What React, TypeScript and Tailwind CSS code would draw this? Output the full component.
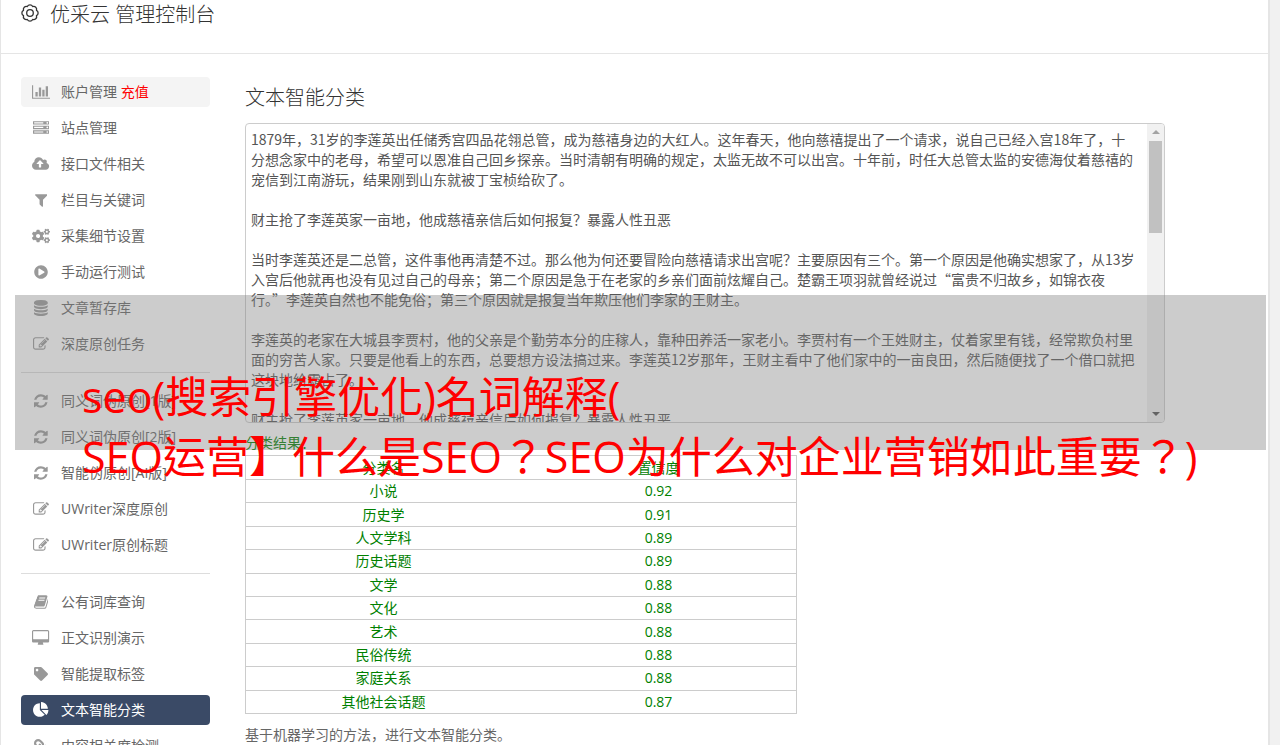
import type { ReactNode } from "react";
import clsx from "clsx";
import { FaCogs, FaLink, FaPlayCircle, FaTag } from "react-icons/fa";

type GlyphProps = {
  width: number;
  d: string;
};

const Glyph: React.FC<GlyphProps> = ({ width, d }) => (
  <svg viewBox={`0 0 ${width} 1792`} className="h-4 w-auto" fill="currentColor">
    <path d={d} />
  </svg>
);

const Gear = () => (
  <svg viewBox="0 0 18 18" className="mt-1 size-[18px]" fill="none" stroke="currentColor" strokeWidth="1.3" strokeLinejoin="round">
    <path d="M15.470 6.320A3 3 0 0 1 15.470 11.680A3 3 0 0 1 11.680 15.470A3 3 0 0 1 6.320 15.470A3 3 0 0 1 2.530 11.680A3 3 0 0 1 2.530 6.320A3 3 0 0 1 6.320 2.530A3 3 0 0 1 11.680 2.530A3 3 0 0 1 15.470 6.320Z" />
    <circle cx="9" cy="9" r="3.300" />
  </svg>
);

const BarChart = () => <Glyph width={2048} d="M640 896v512H384V896h256zm384-512v1024H768V384h256zm1024 1152v128H0V128h128v1408h1920zm-640-896v768h-256V640h256zm384-384v1152h-256V256h256z" />;
const Server = () => <Glyph width={1792} d="M128 1408h1024v-128h-1024v128zm0-512h1024v-128h-1024v128zm1568 448q0-40-28-68t-68-28-68 28-28 68 28 68 68 28 68-28 28-68zm-1568-960h1024v-128h-1024v128zm1568 448q0-40-28-68t-68-28-68 28-28 68 28 68 68 28 68-28 28-68zm0-512q0-40-28-68t-68-28-68 28-28 68 28 68 68 28 68-28 28-68zm96 832v384h-1792v-384h1792zm0-512v384h-1792v-384h1792zm0-512v384h-1792v-384h1792z" />;
const CloudUpload = () => <Glyph width={1920} d="M1280 864q0-14-9-23l-352-352q-9-9-23-9t-23 9l-351 351q-10 12-10 24 0 14 9 23t23 9h224v352q0 13 9.500 22.500t22.500 9.500h192q13 0 22.500-9.500t9.500-22.500v-352h224q13 0 22.500-9.500t9.500-22.500zm640 288q0 159-112.500 271.500t-271.500 112.500h-1088q-185 0-316.500-131.500t-131.500-316.500q0-130 70-240t188-165q-2-30-2-43 0-212 150-362t362-150q156 0 285.500 87t188.500 231q71-62 166-62 106 0 181 75t75 181q0 76-41 138 130 31 213.500 135.500t83.500 238.500z" />;
const Filter = () => <Glyph width={1408} d="M1403 295q17 41-14 70l-493 493v742q0 42-39 59-13 5-25 5-27 0-45-19l-256-256q-19-19-19-45v-486l-493-493q-31-29-14-70 17-39 59-39h1280q42 0 59 39z" />;
const Database = () => <Glyph width={1536} d="M768 768q237 0 443-43t325-127v170q0 69-103 128t-280 93.5-385 34.500-385-34.500-280-93.500-103-128v-170q119 84 325 127t443 43zm0 768q237 0 443-43t325-127v170q0 69-103 128t-280 93.500-385 34.500-385-34.500-280-93.500-103-128v-170q119 84 325 127t443 43zm0-384q237 0 443-43t325-127v170q0 69-103 128t-280 93.500-385 34.500-385-34.500-280-93.500-103-128v-170q119 84 325 127t443 43zm0-1152q208 0 385 34.500t280 93.500 103 128v128q0 69-103 128t-280 93.500-385 34.500-385-34.500-280-93.500-103-128v-128q0-69 103-128t280-93.500 385-34.500z" />;
const Edit = () => <Glyph width={1792} d="M888 1184l116-116-152-152-116 116v56h96v96h56zm440-720q-16-16-33 1l-350 350q-17 17-1 33t33-1l350-350q17-17 1-33zm80 594v190q0 119-84.500 203.500t-203.500 84.500h-832q-119 0-203.500-84.500t-84.500-203.500v-832q0-119 84.500-203.500t203.500-84.500h832q63 0 117 25 15 7 18 23 3 17-9 29l-49 49q-14 14-32 8-23-6-45-6h-832q-66 0-113 47t-47 113v832q0 66 47 113t113 47h832q66 0 113-47t47-113v-126q0-13 9-22l64-64q15-15 35-7t20 29zm-96-738l288 288-672 672h-288v-288zm444 132l-92 92-288-288 92-92q28-28 68-28t68 28l152 152q28 28 28 68t-28 68z" />;
const Refresh = () => <Glyph width={1536} d="M1511 1056q0 5-1 7-64 268-268 434.500t-478 166.500q-146 0-282.500-55t-243.500-157l-129 129q-19 19-45 19t-45-19-19-45v-448q0-26 19-45t45-19h448q26 0 45 19t19 45-19 45l-137 137q71 66 161 102t187 36q134 0 250-65t186-179q11-17 53-117 8-23 30-23h192q13 0 22.500 9.500t9.500 22.500zm25-800v448q0 26-19 45t-45 19h-448q-26 0-45-19t-19-45 19-45l138-138q-148-137-349-137-134 0-250 65t-186 179q-11 17-53 117-8 23-30 23h-199q-13 0-22.500-9.500t-9.500-22.500v-7q65-268 270-434.500t480-166.500q146 0 284 55.500t245 156.500l130-129q19-19 45-19t45 19 19 45z" />;
const Book = () => <Glyph width={1664} d="M1639 478q40 57 18 129l-275 906q-19 64-76.500 107.500t-122.500 43.500h-923q-77 0-148.500-53.500t-99.500-131.500q-24-67-2-127 0-4 3-27t4-37q1-8-3-21.500t-3-19.500q2-11 8-21t16.500-23.500 16.500-23.500q23-38 45-91.500t30-91.500q3-10 .5-30t-.5-28q3-11 17-28t17-23q21-36 42-92t25-90q1-9-2.500-32t.5-28q4-13 22-30.500t22-22.500q19-26 42.500-84.500t27.500-96.500q1-8-3-25.500t-2-26.500q2-8 9-18t18-23 17-21q8-12 16.500-30.500t15-35 16-36 19.500-32 26.500-23.500 36-11.500 47.500 5.500l-1 3q38-9 51-9h761q74 0 114 56t18 130l-274 906q-36 119-71.500 153.500t-128.500 34.500h-869q-27 0-38 15-11 16-1 43 24 70 144 70h923q29 0 56-15.500t35-41.500l300-987q7-22 5-57 38 15 59 43zm-1064 2q-4 13 2 22.500t20 9.500h608q13 0 25.500-9.500t16.500-22.500l21-64q4-13-2-22.500t-20-9.500h-608q-13 0-25.500 9.500t-16.500 22.500zm-83 256q-4 13 2 22.500t20 9.500h608q13 0 25.500-9.500t16.500-22.500l21-64q4-13-2-22.500t-20-9.500h-608q-13 0-25.500 9.500t-16.500 22.500z" />;
const Desktop = () => <Glyph width={1920} d="M1792 992v-832q0-13-9.500-22.500t-22.500-9.500h-1600q-13 0-22.500 9.500t-9.500 22.500v832q0 13 9.500 22.500t22.500 9.500h1600q13 0 22.500-9.500t9.500-22.500zm128-832v1088q0 66-47 113t-113 47h-544q0 37 16 77.500t32 71 16 43.500q0 26-19 45t-45 19h-512q-26 0-45-19t-19-45q0-14 16-44t32-70 16-78h-544q-66 0-113-47t-47-113v-1088q0-66 47-113t113-47h1600q66 0 113 47t47 113z" />;
const PieChart = () => <Glyph width={1792} d="M768 890l546 546q-106 108-247.500 168t-298.500 60q-209 0-385.500-103t-279.500-279.500-103-385.500 103-385.500 279.500-279.500 385.500-103v762zm187 6h773q0 157-60 298.500t-168 247.500zm709-128h-768v-768q209 0 385.500 103t279.500 279.500 103 385.500z" />;

type MenuItem = {
  label: string;
  icon: ReactNode;
  extra?: string;
  state?: "hover" | "active";
};

const menu: MenuItem[][] = [
  [
    { label: "账户管理", icon: <BarChart />, extra: "充值", state: "hover" },
    { label: "站点管理", icon: <Server /> },
    { label: "接口文件相关", icon: <CloudUpload /> },
    { label: "栏目与关键词", icon: <Filter /> },
    { label: "采集细节设置", icon: <FaCogs className="size-[18px]" /> },
    { label: "手动运行测试", icon: <FaPlayCircle className="size-3.5" /> },
    { label: "文章暂存库", icon: <Database /> },
    { label: "深度原创任务", icon: <Edit /> },
  ],
  [
    { label: "同义词伪原创[1版]", icon: <Refresh /> },
    { label: "同义词伪原创[2版]", icon: <Refresh /> },
    { label: "智能伪原创[AI版]", icon: <Refresh /> },
    { label: "UWriter深度原创", icon: <Edit /> },
    { label: "UWriter原创标题", icon: <Edit /> },
  ],
  [
    { label: "公有词库查询", icon: <Book /> },
    { label: "正文识别演示", icon: <Desktop /> },
    { label: "智能提取标签", icon: <FaTag className="size-3.5" /> },
    { label: "文本智能分类", icon: <PieChart />, state: "active" },
    { label: "内容相关度检测", icon: <FaLink className="size-3.5 -scale-x-100" /> },
  ],
];

const article = `1879年，31岁的李莲英出任储秀宫四品花翎总管，成为慈禧身边的大红人。这年春天，他向慈禧提出了一个请求，说自己已经入宫18年了，十分想念家中的老母，希望可以恩准自己回乡探亲。当时清朝有明确的规定，太监无故不可以出宫。十年前，时任大总管太监的安德海仗着慈禧的宠信到江南游玩，结果刚到山东就被丁宝桢给砍了。

财主抢了李莲英家一亩地，他成慈禧亲信后如何报复？暴露人性丑恶

当时李莲英还是二总管，这件事他再清楚不过。那么他为何还要冒险向慈禧请求出宫呢？主要原因有三个。第一个原因是他确实想家了，从13岁入宫后他就再也没有见过自己的母亲；第二个原因是急于在老家的乡亲们面前炫耀自己。楚霸王项羽就曾经说过“富贵不归故乡，如锦衣夜行。”李莲英自然也不能免俗；第三个原因就是报复当年欺压他们李家的王财主。

李莲英的老家在大城县李贾村，他的父亲是个勤劳本分的庄稼人，靠种田养活一家老小。李贾村有一个王姓财主，仗着家里有钱，经常欺负村里面的穷苦人家。只要是他看上的东西，总要想方设法搞过来。李莲英12岁那年，王财主看中了他们家中的一亩良田，然后随便找了一个借口就把这块地给霸占了。

财主抢了李莲英家一亩地，他成慈禧亲信后如何报复？暴露人性丑恶`;

const results = [
  ["小说", "0.92"],
  ["历史学", "0.91"],
  ["人文学科", "0.89"],
  ["历史话题", "0.89"],
  ["文学", "0.88"],
  ["文化", "0.88"],
  ["艺术", "0.88"],
  ["民俗传统", "0.88"],
  ["家庭关系", "0.88"],
  ["其他社会话题", "0.87"],
];

const SidebarLink: React.FC<MenuItem> = ({ label, icon, extra, state }) => (
  <a
    href="#"
    className={clsx(
      "flex h-[30px] items-center rounded",
      state === "active" ? "bg-[#3a4a66] text-white" : "text-[#666]",
      state === "hover" && "bg-[#f4f4f4]"
    )}
  >
    <span className={clsx("flex w-10 justify-center", state !== "active" && "text-[#999]")}>
      {icon}
    </span>
    <span>
      {label}
      {extra && <span className="text-[#f00]"> {extra}</span>}
    </span>
  </a>
);

const Scrollbar = () => (
  <div aria-hidden="true" className="flex w-[17px] flex-col items-center bg-[#f1f1f1] py-[6px]">
    <div className="border-x-4 border-b-4 border-x-transparent border-b-[#a3a3a3]" />
    <div className="mt-[7px] h-[92px] w-[13px] bg-[#c1c1c1]" />
    <div className="mt-auto border-x-4 border-t-4 border-x-transparent border-t-[#505050]" />
  </div>
);

export default function App() {
  return (
    <div className="relative h-screen overflow-hidden bg-[#f1f1f1] pr-2.5 font-['Open_Sans','Noto_Sans_CJK_SC',sans-serif] text-sm leading-5 text-[#666]">
      <div className="min-h-full border-r-2 border-l border-[#e5e5e5] bg-white">
        <header className="flex h-[54px] gap-[11px] border-b border-[#e5e5e5] pl-5 text-[#333]">
          <Gear />
          <h1 className="text-xl leading-[30px] font-light">优采云 管理控制台</h1>
        </header>

        <div className="flex gap-[35px] pt-[23px] pl-5">
          <nav className="w-[189px] shrink-0">
            {menu.map((group, i) => (
              <ul
                key={i}
                className={clsx("space-y-1.5", i > 0 && "mt-[13px] border-t border-[#ddd] pt-[13px]")}
              >
                {group.map((item) => (
                  <li key={item.label}>
                    <SidebarLink {...item} />
                  </li>
                ))}
              </ul>
            ))}
          </nav>

          <main className="min-w-0 flex-1">
            <h2 className="pt-1.5 pb-2.5 text-xl leading-[30px] font-light text-[#333]">
              <label htmlFor="content">文本智能分类</label>
            </h2>
            <div className="flex h-[300px] max-w-[920px] overflow-hidden rounded border border-[#ccc]">
              <textarea
                id="content"
                defaultValue={article}
                className="min-w-0 flex-1 resize-none overflow-hidden py-[5px] pr-2.5 pl-[5px] font-['Noto_Sans_CJK_SC',sans-serif] text-[#555] outline-none"
              />
              <Scrollbar />
            </div>

            <div className="mt-2.5 text-[#008000]">
              <p>分类结果：</p>
              <table className="mt-0.5 h-[259px] w-[552px] table-fixed border-collapse border border-[#ccc] text-center">
                <thead>
                  <tr className="h-6 border-b border-[#ccc]">
                    <th className="p-0 font-normal">分类名</th>
                    <th className="p-0 font-normal">置信度</th>
                  </tr>
                </thead>
                <tbody>
                  {results.map(([name, score]) => (
                    <tr key={name} className="border-b border-[#ccc]">
                      <td className="p-0">{name}</td>
                      <td className="p-0">{score}</td>
                    </tr>
                  ))}
                </tbody>
              </table>
            </div>
            <p className="mt-[11px]">基于机器学习的方法，进行文本智能分类。</p>
          </main>
        </div>
      </div>

      {/* title banner over the console */}
      <div className="absolute top-[295px] right-3.5 left-[15px] h-[155px] bg-[#808080]/40 pt-[72px] pl-[67px] font-['Open_Sans','Noto_Sans_CJK_TC',sans-serif] text-[43px] leading-[60px] whitespace-nowrap text-[#f00]">
        <p>seo(搜索引擎优化)名词解释(</p>
        <p>SEO运营】什么是SEO？SEO为什么对企业营销如此重要？)</p>
      </div>
    </div>
  );
}
